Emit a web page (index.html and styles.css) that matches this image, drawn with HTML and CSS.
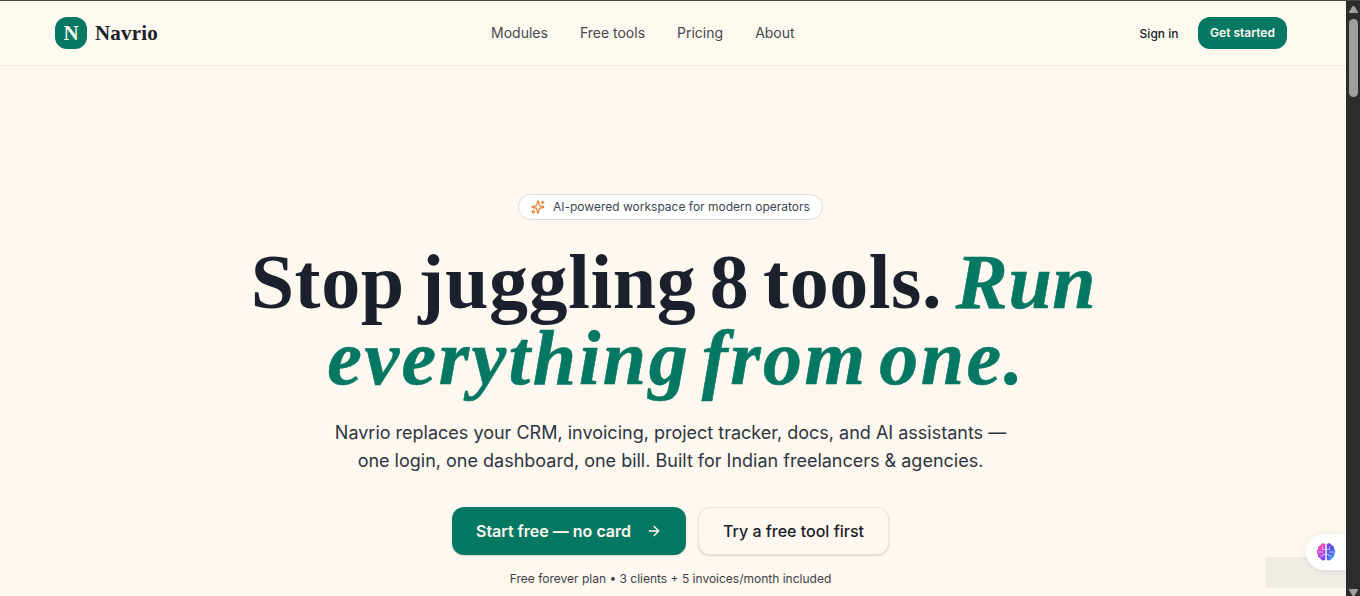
FILE: index.html
```html
<!DOCTYPE html>
<html lang="en">
<head>
  <meta charset="UTF-8">
  <meta name="viewport" content="width=device-width, initial-scale=1.0">
  <title>Navrio</title>
  <link rel="stylesheet" href="styles.css">
</head>
<body>
  <div class="page">
    <header class="header">
      <div class="header-inner">
        <a class="brand" href="#">
          <span class="brand-mark">N</span>
          <span class="brand-name">Navrio</span>
        </a>
        <nav class="nav">
          <a href="#">Modules</a>
          <a href="#">Free tools</a>
          <a href="#">Pricing</a>
          <a href="#">About</a>
        </nav>
        <div class="header-actions">
          <a class="sign-in" href="#">Sign in</a>
          <a class="get-started" href="#">Get started</a>
        </div>
      </div>
    </header>

    <main class="hero">
      <div class="pill">
        <svg class="pill-icon" viewBox="0 0 24 24" fill="none" stroke="currentColor" stroke-width="2" stroke-linecap="round" stroke-linejoin="round">
          <path d="M11.017 2.814a1 1 0 0 1 1.966 0l1.051 5.558a2 2 0 0 0 1.594 1.594l5.558 1.051a1 1 0 0 1 0 1.966l-5.558 1.051a2 2 0 0 0-1.594 1.594l-1.051 5.558a1 1 0 0 1-1.966 0l-1.051-5.558a2 2 0 0 0-1.594-1.594l-5.558-1.051a1 1 0 0 1 0-1.966l5.558-1.051a2 2 0 0 0 1.594-1.594z"/>
          <path d="M20 2v4M22 4h-4"/>
          <circle cx="4" cy="20" r="2"/>
        </svg>
        <span class="pill-text">AI-powered workspace for modern operators</span>
      </div>

      <h1 class="title">
        <span class="title-line">Stop juggling 8 tools. <em class="title-run">Run</em></span>
        <em class="title-line title-second">everything from one.</em>
      </h1>

      <p class="lead">Navrio replaces your CRM, invoicing, project tracker, docs, and AI assistants —<br>one login, one dashboard, one bill. Built for Indian freelancers &amp; agencies.</p>

      <div class="buttons">
        <a class="button button-primary" href="#">
          <span>Start free — no card</span>
          <svg class="arrow" viewBox="0 0 24 24" fill="none" stroke="currentColor" stroke-width="2" stroke-linecap="round" stroke-linejoin="round">
            <path d="M5 12h14M12 5l7 7-7 7"/>
          </svg>
        </a>
        <a class="button button-outline" href="#">Try a free tool first</a>
      </div>
      <p class="note">Free forever plan • 3 clients + 5 invoices/month included</p>
    </main>

    <div class="status-box"></div>
    <div class="assistant">
      <svg class="brain" viewBox="0 0 20 20">
        <defs>
          <linearGradient id="brain-left" x1="0" y1="0" x2="0.6" y2="1">
            <stop offset="0" stop-color="#ff7a59"/>
            <stop offset="0.4" stop-color="#e84bc4"/>
            <stop offset="1" stop-color="#7548f2"/>
          </linearGradient>
          <linearGradient id="brain-right" x1="0" y1="0" x2="0.7" y2="1">
            <stop offset="0" stop-color="#8b3ff0"/>
            <stop offset="0.6" stop-color="#4a5cf0"/>
            <stop offset="1" stop-color="#35a7f5"/>
          </linearGradient>
        </defs>
        <path fill="url(#brain-left)" d="M9.3 2.3C8 .8 5 1 4.500 3.300 2.500 3.500 1.700 5.200 2 6.800.4 8 .4 11 1.800 12.200 1.400 14.500 2.800 16 4.400 16.200 5 18.700 8 19 9.300 17.500z"/>
        <path fill="url(#brain-right)" d="M10.700 2.300C12 .8 15 1 15.500 3.300 17.500 3.500 18.300 5.200 18 6.800 19.600 8 19.600 11 18.200 12.200 18.600 14.500 17.200 16 15.600 16.200 15 18.700 12 19 10.700 17.500z"/>
        <path fill="none" stroke="#fff" stroke-width="0.8" stroke-opacity="0.75" stroke-linecap="round" d="M2.500 10h4.300M6.500 5v2.500h2.500M5 14h2v-1.500h2M17.500 10h-4M13.500 5v2.500h-2.500M15 14h-2v-1.500h-2"/>
      </svg>
    </div>
  </div>
  <div class="scrollbar">
    <span class="scroll-arrow scroll-up"></span>
    <span class="scroll-thumb"></span>
    <span class="scroll-arrow scroll-down"></span>
  </div>
</body>
</html>
```
FILE: styles.css
```css
* {
  box-sizing: border-box;
}
body {
  display: flex;
  height: 596px;
  margin: 0;
  overflow: hidden;
  border-top: 1px solid #48423d;
  background: #fff8f0;
  font-family: Inter, "Liberation Sans", sans-serif;
  color: #1a202c;
}
a {
  color: inherit;
  text-decoration: none;
}
.page {
  position: relative;
  flex: 1;
  overflow: hidden;
}

/* Header */
.header {
  height: 65px;
  padding-right: 4px;
  border-bottom: 1px solid #ebe8df;
  background: #fffaf0;
}
.header-inner {
  display: flex;
  align-items: center;
  justify-content: space-between;
  width: 1232px;
  height: 64px;
  margin: 0 auto;
}
.brand {
  display: flex;
  align-items: center;
  gap: 8px;
  font-family: "Liberation Serif", serif;
  font-weight: 700;
}
.brand-mark {
  width: 32px;
  height: 32px;
  border-radius: 12px;
  background: #047863;
  color: #fffaf0;
  font-size: 21px;
  line-height: 32px;
  text-align: center;
}
.brand-name {
  font-size: 21px;
  letter-spacing: 0.2px;
}
.nav {
  display: flex;
  gap: 32px;
  padding: 0 12px 1px 0;
  color: #45484e;
  font-size: 14px;
}
.header-actions {
  display: flex;
  align-items: center;
  justify-content: flex-end;
  gap: 19.5px;
  font-size: 12px;
}
.sign-in {
  font-weight: 500;
}
.get-started {
  width: 89px;
  height: 32px;
  border-radius: 12px;
  background: #047863;
  color: #fffaf0;
  font-weight: 600;
  line-height: 32px;
  text-align: center;
}

/* Hero */
.hero {
  display: flex;
  flex-direction: column;
  align-items: center;
  padding: 128px 5px 0 0;
}
.pill {
  display: flex;
  align-items: center;
  gap: 8px;
  width: 305px;
  height: 26px;
  padding: 0 12px;
  border: 1px solid #dedfd7;
  border-radius: 13px;
  background: #fff;
  color: #3d4552;
  font-size: 12px;
  white-space: nowrap;
}
.pill-icon {
  flex: none;
  width: 14px;
  height: 14px;
  color: #ec7c2c;
}
.pill-text {
  padding-bottom: 2px;
}
.title {
  margin: 24px 0 0;
  font-family: "Liberation Serif", serif;
  font-size: 78px;
  font-weight: 700;
  line-height: 76px;
  text-align: center;
  white-space: nowrap;
}
.title-line {
  display: block;
  padding-left: 6px;
  letter-spacing: 0.6px;
  word-spacing: -6.5px;
}
.title-run,
.title-second {
  color: #047863;
  -webkit-text-stroke: 0.6px #047863;
}
.title-second {
  padding-left: 12px;
  letter-spacing: 2.5px;
  word-spacing: -10.5px;
}
.lead {
  margin: 23px 0 0;
  color: #2d3540;
  font-size: 18px;
  line-height: 28px;
  text-align: center;
  white-space: nowrap;
}
.buttons {
  display: flex;
  gap: 12px;
  margin-top: 32px;
}
.button {
  display: flex;
  align-items: center;
  justify-content: center;
  height: 48px;
  border-radius: 12px;
  font-size: 16px;
  font-weight: 500;
  white-space: nowrap;
}
.button-primary {
  gap: 15px;
  width: 234px;
  background: #047863;
  color: #fffaf0;
  font-weight: 600;
  box-shadow: 0 1px 2px rgba(0, 0, 0, 0.12);
}
.arrow {
  width: 16px;
  height: 16px;
}
.button-outline {
  width: 191px;
  border: 1px solid #e8e3dd;
  box-shadow: 0 1px 2px rgba(0, 0, 0, 0.14);
  background: #fff8f0;
}
.note {
  margin: 16px 0 0;
  color: #3d4148;
  font-size: 12px;
  line-height: 16px;
}

/* Floating assistant tab */
.status-box {
  position: absolute;
  right: 0;
  bottom: 8px;
  width: 81px;
  height: 31px;
  border-radius: 3px 0 0 3px;
  background: #f0ebe4;
}
.assistant {
  position: absolute;
  right: 0;
  bottom: 26px;
  display: flex;
  align-items: center;
  width: 40px;
  height: 36px;
  padding-left: 10px;
  border-radius: 18px 0 0 18px;
  background: #fff;
  box-shadow: 0 1px 8px rgba(0, 0, 0, 0.08);
}
.brain {
  width: 20px;
  height: 20px;
}

/* Scrollbar */
.scrollbar {
  display: flex;
  flex-direction: column;
  align-items: center;
  width: 14px;
  padding: 5px 0 0 1px;
  background: #2c2c2c;
}
.scroll-arrow {
  width: 9px;
  height: 7px;
  background: #9f9f9f;
}
.scroll-up {
  clip-path: polygon(40% 0, 60% 0, 100% 85%, 95% 100%, 5% 100%, 0 85%);
}
.scroll-thumb {
  width: 9px;
  height: 78px;
  margin-top: 6px;
  border-radius: 5px;
  background: #9f9f9f;
}
.scroll-down {
  margin-top: auto;
  clip-path: polygon(5% 0, 95% 0, 100% 15%, 60% 100%, 40% 100%, 0 15%);
}
```
